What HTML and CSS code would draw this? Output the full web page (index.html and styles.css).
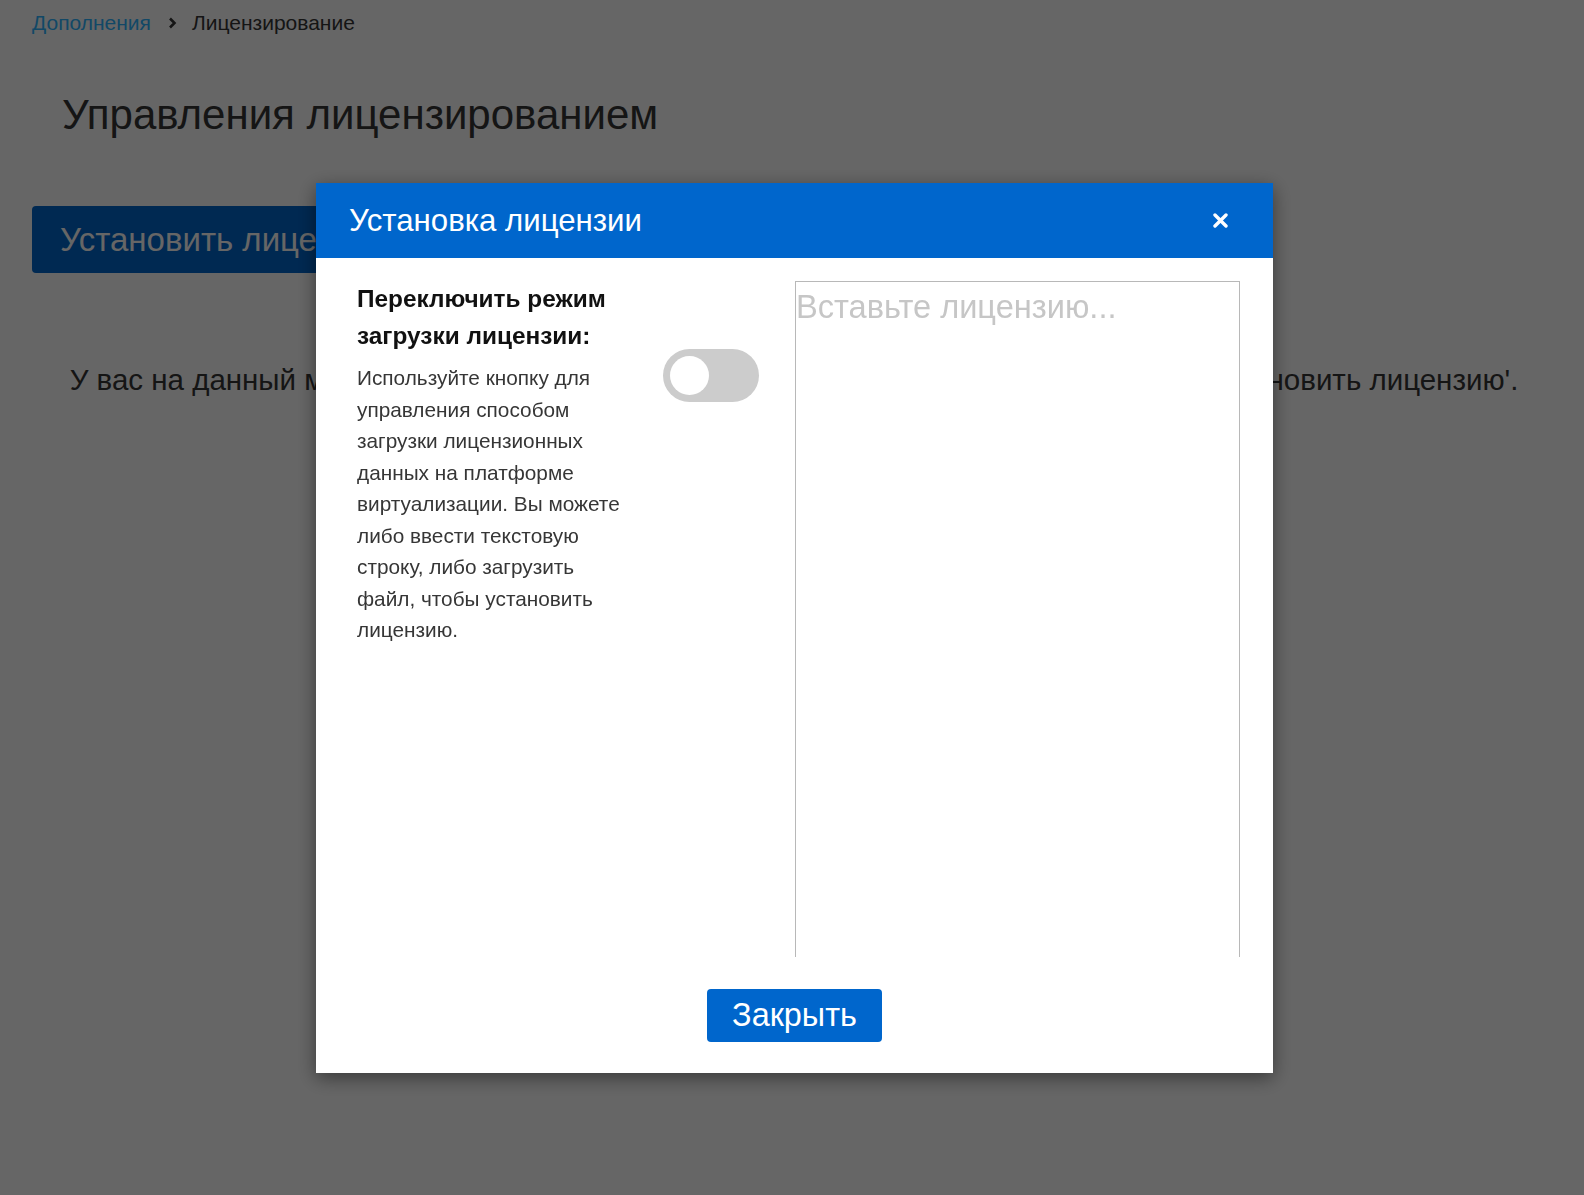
FILE: index.html
```html
<!DOCTYPE html>
<html lang="ru">
<head>
<meta charset="utf-8">
<title>Лицензирование</title>
<link rel="stylesheet" href="styles.css">
</head>
<body>
<div class="page">
  <nav class="breadcrumb">
    <a class="crumb-link" href="#">Дополнения</a>
    <svg class="crumb-sep" width="9" height="12" viewBox="0 0 9 12"><polyline points="2,1.5 6.5,6 2,10.5" fill="none" stroke="#363636" stroke-width="2.6"/></svg>
    <span class="crumb-current">Лицензирование</span>
  </nav>
  <h1 class="page-title">Управления лицензированием</h1>
  <button class="btn page-btn">Установить лицензию</button>
  <p class="page-note">У вас на данный момент нет установленной лицензии. Просто нажмите на кнопку 'Установить лицензию'.</p>
</div>

<div class="backdrop">
  <div class="modal">
    <div class="modal-header">
      <h2 class="modal-title">Установка лицензии</h2>
      <button class="modal-close" aria-label="Закрыть">
        <svg width="15" height="15" viewBox="0 0 15 15"><path d="M2 2 L13 13 M13 2 L2 13" stroke="#fff" stroke-width="3.4" stroke-linecap="round"/></svg>
      </button>
    </div>
    <div class="modal-body">
      <div class="info">
        <h3 class="info-title">Переключить режим загрузки лицензии:</h3>
        <p class="info-text">Используйте кнопку для управления способом загрузки лицензионных данных на платформе виртуализации. Вы можете либо ввести текстовую строку, либо загрузить файл, чтобы установить лицензию.</p>
      </div>
      <span class="switch"><span class="knob"></span></span>
      <textarea class="license-input" placeholder="Вставьте лицензию..."></textarea>
    </div>
    <div class="modal-footer">
      <button class="btn footer-btn">Закрыть</button>
    </div>
  </div>
</div>
</body>
</html>
```

FILE: styles.css
```css
html, body {
  margin: 0;
  padding: 0;
  background: #ffffff;
  font-family: "Liberation Sans", Arial, sans-serif;
  color: #363636;
}

.page {
  display: flex;
  flex-direction: column;
  align-items: flex-start;
}

.breadcrumb {
  display: flex;
  align-items: center;
  padding: 11px 0 0 32px;
  font-size: 21px;
  line-height: 24px;
}

.crumb-link {
  color: rgb(45, 180, 255);
  text-decoration: none;
}

.crumb-sep {
  margin: 0 15px 0 17px;
}

.crumb-current {
  color: #363636;
}

.page-title {
  margin: 55px 0 0 62px;
  font-size: 42px;
  line-height: 50px;
  font-weight: normal;
  color: #363636;
}

.btn {
  font-family: "Liberation Sans", Arial, sans-serif;
  background: #0066cc;
  color: #ffffff;
  border: none;
  border-radius: 4px;
  font-size: 31.5px;
}

.page-btn {
  margin: 66px 0 0 32px;
  padding: 14.5px 28px;
  line-height: 38px;
  font-size: 33px;
}

.page-note {
  align-self: stretch;
  text-align: center;
  margin: 89px 0 0 4px;
  font-size: 29.5px;
  line-height: 36px;
  color: #363636;
}

.backdrop {
  position: fixed;
  inset: 0;
  background: rgba(0, 0, 0, 0.6);
  padding: 183px 0 0 316px;
}

.modal {
  width: 957px;
  background: #ffffff;
  box-shadow: 0 5px 18px rgba(0, 0, 0, 0.45);
  display: flex;
  flex-direction: column;
}

.modal-header {
  height: 75px;
  background: #0066cc;
  display: flex;
  align-items: center;
  justify-content: space-between;
  padding: 0 45px 0 33px;
}

.modal-title {
  margin: 0;
  font-size: 31.2px;
  font-weight: normal;
  color: #ffffff;
}

.modal-close {
  background: none;
  border: none;
  padding: 0;
  width: 15px;
  height: 15px;
  display: flex;
}

.modal-body {
  height: 699px;
  box-sizing: border-box;
  overflow: hidden;
  display: flex;
  align-items: flex-start;
  padding: 23px 33px 0 41px;
}

.info {
  width: 275px;
  flex: none;
}

.info-title {
  margin: 0;
  font-size: 24.4px;
  line-height: 36.5px;
  font-weight: bold;
  color: #111111;
}

.info-text {
  margin: 8px 0 0 0;
  font-size: 20.8px;
  line-height: 31.5px;
  color: #363636;
}

.switch {
  flex: none;
  margin: 68px 0 0 31px;
  width: 96px;
  height: 53px;
  border-radius: 27px;
  background: #cccccc;
  display: flex;
  align-items: center;
  padding-left: 7px;
  box-sizing: border-box;
}

.knob {
  width: 39px;
  height: 39px;
  border-radius: 50%;
  background: #ffffff;
}

.license-input {
  flex: none;
  margin-left: auto;
  width: 445px;
  height: 800px;
  box-sizing: border-box;
  border: 1px solid #b8b8b8;
  padding: 1px 0 0 0;
  resize: none;
  font-family: "Liberation Sans", Arial, sans-serif;
  font-size: 32.6px;
  line-height: 1.5;
  color: #333;
  outline: none;
}

.license-input::placeholder {
  color: #c6c6c6;
}

.modal-footer {
  height: 116px;
  display: flex;
  align-items: center;
  justify-content: center;
}

.footer-btn {
  height: 53px;
  padding: 0 25px;
  line-height: 53px;
  font-size: 32.4px;
}
```
